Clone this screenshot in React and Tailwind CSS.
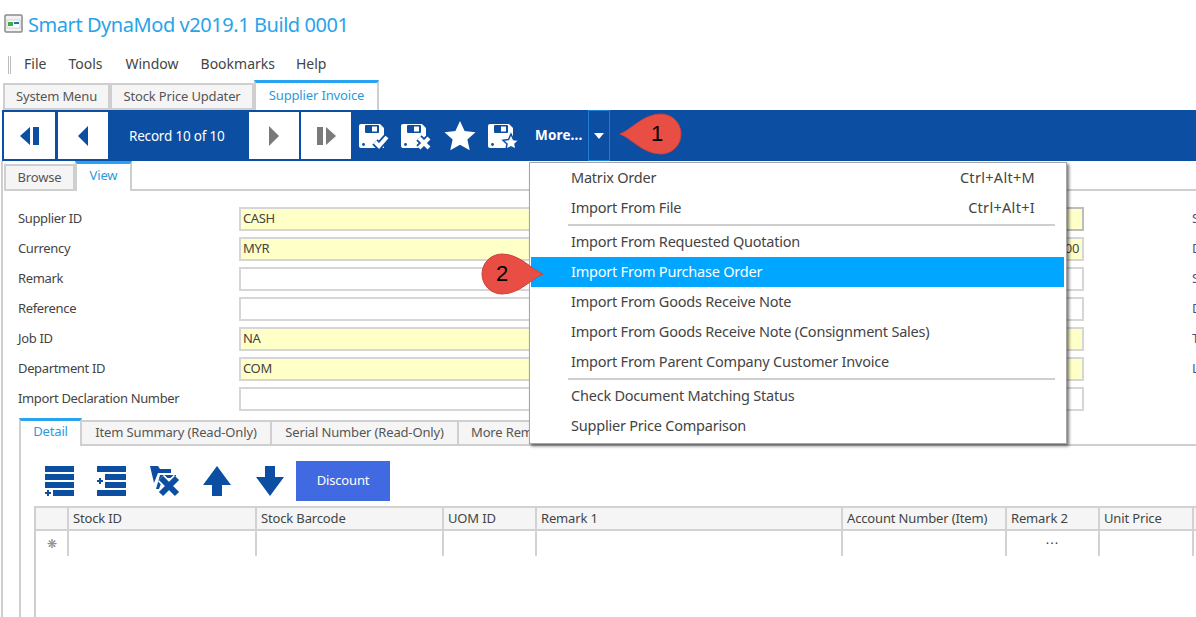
const FONT = "font-['Noto_Sans',sans-serif]";

const menuItems = [
  { label: "Matrix Order", shortcut: "Ctrl+Alt+M" },
  { label: "Import From File", shortcut: "Ctrl+Alt+I" },
  { sep: true },
  { label: "Import From Requested Quotation" },
  { label: "Import From Purchase Order", active: true },
  { label: "Import From Goods Receive Note" },
  { label: "Import From Goods Receive Note (Consignment Sales)" },
  { label: "Import From Parent Company Customer Invoice" },
  { sep: true },
  { label: "Check Document Matching Status" },
  { label: "Supplier Price Comparison" },
];

const formRows = [
  { label: "Supplier ID", value: "CASH", yellow: true, side: "S", focus: true },
  { label: "Currency", value: "MYR", yellow: true, side: "D", right: "00" },
  { label: "Remark", side: "S" },
  { label: "Reference", side: "D" },
  { label: "Job ID", value: "NA", yellow: true, side: "T" },
  { label: "Department ID", value: "COM", yellow: true, side: "L" },
  { label: "Import Declaration Number" },
];

const columns = [
  { name: "Stock ID", w: "w-[188px]" },
  { name: "Stock Barcode", w: "w-[187px]" },
  { name: "UOM ID", w: "w-[93px]" },
  { name: "Remark 1", w: "w-[306px]" },
  { name: "Account Number (Item)", w: "w-[164px]" },
  { name: "Remark 2", w: "w-[93px]", dots: true },
  { name: "Unit Price", w: "w-[94px]" },
];

function Disk({ children }) {
  return (
    <svg width="31" height="30" viewBox="0 0 31 30" fill="white" className="mt-[3px]">
      <path d="M0 4a2 2 0 0 1 2-2h19l4 4v20H2a2 2 0 0 1-2-2z" />
      <rect x="6" y="3" width="14" height="8" rx="1" fill="#0b4ea2" />
      <rect x="13" y="4.500" width="5" height="5" fill="white" />
      <circle cx="4.500" cy="22.500" r="1.400" fill="#0b4ea2" />
      {children}
    </svg>
  );
}

const Star = ({ size = 32 }) => (
  <svg width={size} height={size} viewBox="0 0 32 32" fill="white">
    <path d="M16 1l4.600 10 10.900 1.200-8.100 7.300 2.300 10.800L16 24.800 6.300 30.300l2.300-10.800L.5 12.200 11.400 11z" />
  </svg>
);

function NavButton({ children, className }) {
  return <div className={`flex h-[47px] items-center justify-center bg-white ${className}`}>{children}</div>;
}

function Callout({ n, className, flip }) {
  return (
    <div className={`absolute ${className}`}>
      <svg width="64" height="42" viewBox="0 0 64 42" className={flip ? "-scale-x-100" : ""}>
        <path d="M1 21C12 17 24 1 42 1a20 20 0 0 1 0 40C24 41 12 25 1 21z" fill="#e94e44" stroke="#c9453c" />
      </svg>
      <span className={`absolute top-[9px] text-[22px] leading-6 text-black font-['Liberation_Sans',sans-serif] ${flip ? "left-[16px]" : "left-[32px]"}`}>{n}</span>
    </div>
  );
}

function Tab({ children, active, className }) {
  return active ? (
    <div className={`flex items-center justify-center border-x-2 border-t-[3px] border-x-[#cfcfcf] border-t-[#29a3f0] bg-white text-[#2a9be0] ${className}`}>{children}</div>
  ) : (
    <div className={`flex items-center justify-center border-2 border-[#cfcfcf] bg-[#f5f5f5] text-[#555] ${className}`}>{children}</div>
  );
}

export default function App() {
  return (
    <div className={`relative h-[617px] w-[1196px] overflow-hidden bg-white text-[13px] tracking-[-0.15px] text-[#444] ${FONT}`}>
      {/* title */}
      <div className="flex h-[50px] items-start pl-1 pt-[11px]">
        <svg width="20" height="22" viewBox="0 0 20 22" className="mt-[2px]">
          <rect x="1" y="2" width="17" height="17" rx="1" fill="#f2f2f2" stroke="#8a8a8a" strokeWidth="1.500" />
          <rect x="3" y="7" width="13" height="8" fill="white" stroke="#aaa" strokeWidth=".5" />
          <rect x="4" y="9" width="5" height="4" fill="#3fae49" />
          <rect x="10" y="9" width="5" height="2" fill="#1f6fb5" />
        </svg>
        <h1 className="ml-[4px] text-[20px] leading-7 font-normal tracking-[-0.44px] text-[#29a3e8]">Smart DynaMod v2019.1 Build 0001</h1>
      </div>

      {/* menu bar */}
      <div className="flex h-[30px] items-center pb-[3px] text-[14px] tracking-normal">
        <div className="ml-2 mt-[3px] h-[18px] w-[3px] border-x border-[#bbb]" />
        <span className="ml-[13px]">File</span>
        <span className="ml-[22px]">Tools</span>
        <span className="ml-[23px]">Window</span>
        <span className="ml-[22px]">Bookmarks</span>
        <span className="ml-[21px]">Help</span>
      </div>

      {/* window tabs */}
      <div className="flex h-[30px] items-end pl-[3px]">
        <Tab className="h-[27px] w-[107px]">System Menu</Tab>
        <Tab className="h-[27px] w-[144px]">Stock Price Updater</Tab>
        <Tab active className="h-[30px] w-[125px] pb-[1px]">Supplier Invoice</Tab>
      </div>

      {/* toolbar */}
      <div className="ml-[2px] flex h-[51px] items-center bg-[#0b4ea2] pl-[2px] text-[13.500px] tracking-[-0.2px] text-white">
        <NavButton className="w-[51px]">
          <svg width="22" height="22" viewBox="0 0 22 22" fill="#0b4ea2"><path d="M11 2v18L1 11z" /><rect x="14" y="2" width="6" height="18" /></svg>
        </NavButton>
        <NavButton className="ml-[3px] w-[50px]">
          <svg width="12" height="20" viewBox="0 0 12 20" fill="#0b4ea2"><path d="M11 0v20L1 10z" /></svg>
        </NavButton>
        <div className="ml-[21px] w-[120px] pt-[2px]">Record 10 of 10</div>
        <NavButton className="w-[50px]">
          <svg width="12" height="20" viewBox="0 0 12 20" fill="#7a7a7a"><path d="M1 0v20l10-10z" /></svg>
        </NavButton>
        <NavButton className="ml-[2px] w-[50px]">
          <svg width="22" height="22" viewBox="0 0 22 22" fill="#7a7a7a"><rect x="2" y="2" width="6" height="18" /><path d="M11 2v18l10-9z" /></svg>
        </NavButton>
        <div className="ml-[8px] flex w-[130px] items-center gap-[11px]">
          <Disk>
            <path d="M16 20l4 4 8-9" fill="none" stroke="#0b4ea2" strokeWidth="7.500" />
            <path d="M16 20l4 4 8-9" fill="none" stroke="white" strokeWidth="4" />
          </Disk>
          <Disk>
            <path d="M18 16l10 10M28 16 18 26" fill="none" stroke="#0b4ea2" strokeWidth="7.500" />
            <path d="M18 16l10 10M28 16 18 26" fill="none" stroke="white" strokeWidth="4" />
          </Disk>
          <div className="ml-[1px]"><Star /></div>
        </div>
        <div className="-ml-[1px] w-[47px]">
          <Disk>
            <path d="M23 12l2.500 5.500 5.500.7-4 3.800 1 5.500-5-2.700-5 2.700 1-5.500-4-3.800 5.500-.7z" stroke="#0b4ea2" strokeWidth="1.500" />
          </Disk>
        </div>
        <span className="font-bold tracking-[0.15px]">More...</span>
        <div className="ml-[6px] flex h-[51px] w-[22px] items-center justify-center border border-[#1f7fd6]">
          <svg width="10" height="6" viewBox="0 0 10 6" fill="white"><path d="M0 0h10L5 6z" /></svg>
        </div>
      </div>

      <div className="ml-[1px] h-[456px] border-l-2 border-[#cfcfcf]">
        {/* record tabs */}
        <div className="flex h-[30px] items-end pl-[1px]">
          <Tab className="h-[27px] w-[71px] pt-[1px]">Browse</Tab>
          <Tab active className="h-[30px] w-[57px] pb-1">View</Tab>
          <div className="h-[2px] flex-1 bg-[#cfcfcf]" />
        </div>

        {/* form */}
        <div className="flex flex-col gap-[6px] pl-[15px] pt-[16px] tracking-[-0.35px]">
          {formRows.map((row) => (
            <div key={row.label} className="flex h-6 items-center">
              <span className="w-[221px] shrink-0">{row.label}</span>
              <div className={`flex h-6 w-[400px] shrink-0 items-center border-2 border-[#d6d6d6] pl-[2px] ${row.yellow ? "bg-[#ffffc8]" : "bg-white"}`}>{row.value}</div>
              <div className={`ml-[100px] flex h-6 w-[345px] shrink-0 items-center justify-end border-2 ${row.focus ? "border-[#bdbdbd]" : "border-[#d6d6d6]"} pr-[3px] ${row.yellow ? "bg-[#ffffc8]" : "bg-white"}`}>{row.right}</div>
              <span className="ml-[108px] text-[#44548a]">{row.side}</span>
            </div>
          ))}
        </div>

        {/* detail panel */}
        <div className="mt-[8px] flex h-[27px] items-end pl-[16px]">
          <Tab active className="h-[28px] w-[63px] pb-1">Detail</Tab>
          <Tab className="h-[26px] w-[190px] border-l-0">Item Summary (Read-Only)</Tab>
          <Tab className="h-[26px] w-[187px] border-l-0">Serial Number (Read-Only)</Tab>
          <Tab className="h-[26px] w-[120px] justify-start border-l-0 pl-3">More Remark</Tab>
          <div className="h-[2px] flex-1 bg-[#cfcfcf]" />
        </div>
        <div className="ml-[16px] h-[172px] border-l-2 border-[#cfcfcf]">
          <div className="flex h-[60px] items-center pl-[23px] pt-[9px] text-[#0b4ea2]">
            <svg width="32" height="32" viewBox="0 0 32 32" fill="currentColor">
              <rect x="1" y="1" width="29" height="6" /><rect x="1" y="9" width="29" height="6" /><rect x="1" y="17" width="29" height="6" />
              <rect x="9" y="25" width="21" height="6" /><path d="M3 25h2v2h2v2H5v2H3v-2H1v-2h2z" />
            </svg>
            <svg width="32" height="32" viewBox="0 0 32 32" fill="currentColor" className="ml-[20px]">
              <rect x="1" y="1" width="29" height="6" /><rect x="9" y="9" width="21" height="6" /><rect x="9" y="17" width="21" height="6" />
              <rect x="1" y="25" width="29" height="6" /><path d="M3 13h2v2h2v2H5v2H3v-2H1v-2h2z" />
            </svg>
            <svg width="32" height="32" viewBox="0 0 32 32" fill="currentColor" className="ml-[21px]">
              <path d="M1 1h8l2 3h11v4H9L5 18z" />
              <path d="M7 24 11 10h16v3H14l-4 11z" />
              <path d="M12 13l16 16M28 13 12 29" fill="none" stroke="white" strokeWidth="9" />
              <path d="M12 13l16 16M28 13 12 29" fill="none" stroke="currentColor" strokeWidth="6" />
            </svg>
            <svg width="30" height="32" viewBox="0 0 30 32" fill="currentColor" className="ml-[21px]">
              <path d="M15 1l14 19H20v11h-10V20H1z" />
            </svg>
            <svg width="30" height="32" viewBox="0 0 30 32" fill="currentColor" className="ml-[23px]">
              <path d="M10 1h10v11h9L15 31 1 12h9z" />
            </svg>
            <button className="ml-[11px] h-10 w-[94px] bg-[#4169e1] text-white">Discount</button>
          </div>

          {/* grid */}
          <div className="ml-[13px] h-[112px] border-l-2 border-[#cfcfcf]">
            <div className="flex h-[25px] border-y-2 border-[#d2d2d2] bg-[#f5f5f5]">
              <div className="w-[33px] shrink-0 border-r-2 border-[#d2d2d2]" />
              {columns.map((c) => (
                <div key={c.name} className={`flex shrink-0 items-center border-r-2 border-[#d2d2d2] pl-[4px] ${c.w}`}>{c.name}</div>
              ))}
            </div>
            <div className="flex h-[25px]">
              <div className="flex w-[33px] shrink-0 items-center justify-center border-r-2 border-[#d2d2d2] text-[12px] text-[#888]">❋</div>
              {columns.map((c) => (
                <div key={c.name} className={`flex shrink-0 items-center justify-center border-r-2 border-[#d2d2d2] tracking-[1px] ${c.w}`}>{c.dots ? "···" : ""}</div>
              ))}
            </div>
          </div>
        </div>
      </div>

      {/* dropdown menu */}
      <div className="absolute top-[162px] left-[529px] flex h-[282px] w-[538px] flex-col border border-[#a5a5a5] bg-white pr-[2px] pl-[1px] text-[14.500px] tracking-[-0.22px] shadow-[2px_2px_3px_rgba(0,0,0,0.55)]">
        {menuItems.map((item, i) =>
          item.sep ? (
            <div key={i} className="my-[1px] ml-[37px] mr-[9px] h-[2px] bg-[#cfcfcf]" />
          ) : (
            <div key={item.label} className={`flex h-[30px] items-center justify-between pr-[29px] pl-[40px] ${item.active ? "bg-[#00a6ff] text-white" : ""}`}>
              <span>{item.label}</span>
              {item.shortcut && <span className="tracking-[0.3px]">{item.shortcut}</span>}
            </div>
          )
        )}
      </div>

      <Callout n="1" className="top-[113px] left-[619px]" />
      <Callout n="2" flip className="top-[253px] left-[480px]" />
    </div>
  );
}
